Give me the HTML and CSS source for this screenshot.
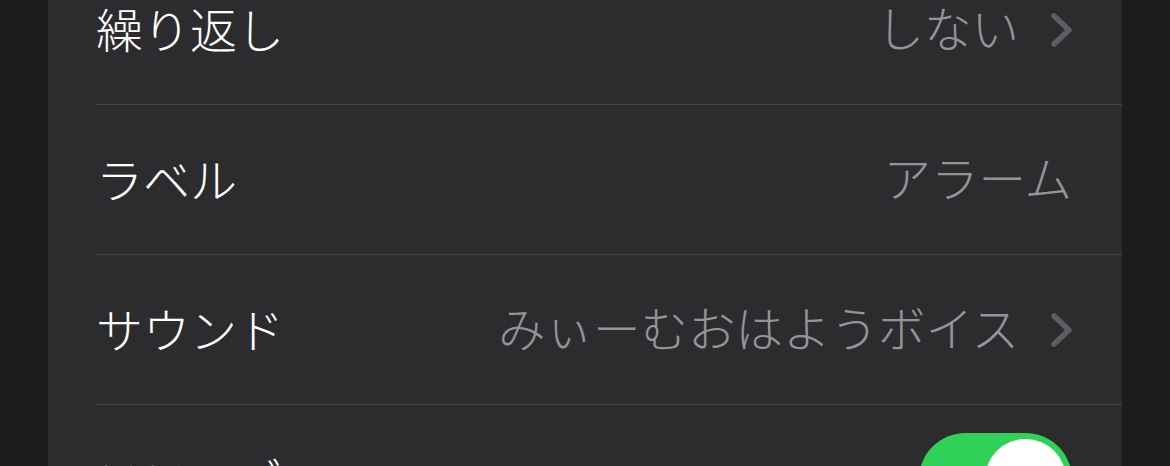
FILE: index.html
```html
<!DOCTYPE html>
<html lang="ja">
<head>
<meta charset="utf-8">
<link rel="stylesheet" href="styles.css">
</head>
<body>
<div class="page">
  <div class="card">
    <div class="row">
      <div class="row-inner">
        <span class="label">繰り返し</span>
        <span class="value">しない</span>
        <svg class="chevron" viewBox="0 0 24 36" width="24" height="36"><path d="M4 4 L19 18 L4 32" fill="none" stroke="#5d5d62" stroke-width="5.5" stroke-linecap="round" stroke-linejoin="round"/></svg>
      </div>
    </div>
    <div class="row">
      <div class="row-inner">
        <span class="label">ラベル</span>
        <span class="value">アラーム</span>
      </div>
    </div>
    <div class="row">
      <div class="row-inner">
        <span class="label">サウンド</span>
        <span class="value">みぃーむおはようボイス</span>
        <svg class="chevron" viewBox="0 0 24 36" width="24" height="36"><path d="M4 4 L19 18 L4 32" fill="none" stroke="#5d5d62" stroke-width="5.5" stroke-linecap="round" stroke-linejoin="round"/></svg>
      </div>
    </div>
    <div class="row">
      <div class="row-inner last">
        <span class="label">スヌーズ</span>
        <span class="toggle"><span class="knob"></span></span>
      </div>
    </div>
  </div>
</div>
</body>
</html>
```

FILE: styles.css
```css
html, body {
  margin: 0;
  padding: 0;
  background: #1c1c1e;
  height: 100%;
  overflow: hidden;
}
.page {
  padding: 0 48px;
  font-family: "Noto Sans CJK JP", "Noto Sans", sans-serif;
}
.card {
  background: #2c2c2e;
  margin-top: -45px;
  height: 700px;
}
.row {
  padding-left: 48px;
}
.row-inner {
  height: 149px;
  display: flex;
  align-items: center;
  padding-right: 50px;
  border-bottom: 1px solid #424246;
}
.row-inner.last {
  border-bottom: none;
}
.label {
  flex: 1;
  color: #ffffff;
  font-size: 47px;
  font-weight: 300;
  line-height: 1;
  padding-bottom: 5px;
}
.value {
  color: #949499;
  font-size: 47.5px;
  font-weight: 300;
  line-height: 1;
  padding-bottom: 5px;
}
.chevron {
  display: block;
  margin-left: 31px;
  margin-right: -2px;
}
.toggle {
  width: 153px;
  height: 93px;
  border-radius: 47px;
  background: #30d158;
  display: flex;
  align-items: center;
  justify-content: flex-end;
  padding-right: 6px;
  box-sizing: border-box;
}
.knob {
  width: 81px;
  height: 81px;
  border-radius: 50%;
  background: #ffffff;
}
```
